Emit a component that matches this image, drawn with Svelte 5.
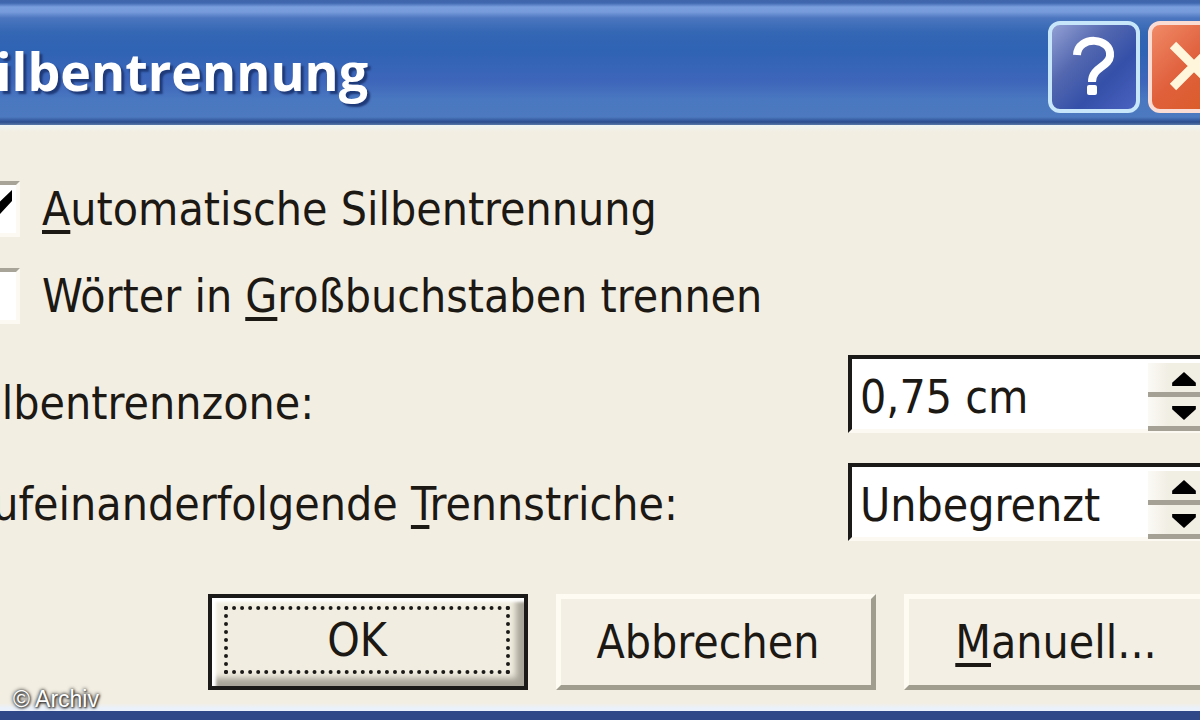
<script lang="ts">
  let autoHyphenate = $state(true);
  let hyphenateCaps = $state(false);
  let zone = $state(0.75);
  let limit = $state(0);

  let zoneText = $derived(zone.toFixed(2).replace(".", ",") + " cm");
  let limitText = $derived(limit === 0 ? "Unbegrenzt" : String(limit));

  function stepZone(delta: number) {
    zone = Math.max(0.25, zone + delta);
  }

  function stepLimit(delta: number) {
    limit = Math.max(0, limit + delta);
  }
</script>

{#snippet spinner(name: string, step: (dir: number) => void)}
  <div class="spinner">
    <button type="button" aria-label="{name} erhöhen" onclick={() => step(1)}>
      <svg viewBox="0 0 22 13"><path d="M11 0 L22 10 V13 H0 V10 Z" /></svg>
    </button>
    <button
      type="button"
      aria-label="{name} verringern"
      onclick={() => step(-1)}
    >
      <svg viewBox="0 0 22 13"><path d="M0 0 H22 V3 L11 13 L0 3 Z" /></svg>
    </button>
  </div>
{/snippet}

<main class="screen">
  <div class="dialog" role="dialog" aria-labelledby="dialog-title">
    <header class="titlebar">
      <h1 id="dialog-title">Silbentrennung</h1>
      <button type="button" class="caption help" aria-label="Hilfe">
        <svg viewBox="0 0 84 84">
          <path
            d="M25 30 C26 10 60 12 58 31 C57 42 40 42 40 57"
            fill="none"
            stroke="#fff"
            stroke-width="8"
          />
          <rect x="35" y="60" width="10" height="10" rx="2" fill="#fff" />
        </svg>
      </button>
      <button type="button" class="caption close" aria-label="Schließen">
        <svg viewBox="0 0 84 84">
          <path
            d="M21 20 L63 62 M63 20 L21 62"
            fill="none"
            stroke="#fff6dc"
            stroke-width="9"
          />
        </svg>
      </button>
    </header>

    <form class="content" onsubmit={(e) => e.preventDefault()}>
      <div class="checks">
        <label class="check">
          <input type="checkbox" bind:checked={autoHyphenate} />
          <span><u>A</u>utomatische Silbentrennung</span>
        </label>
        <label class="check">
          <input type="checkbox" bind:checked={hyphenateCaps} />
          <span>Wörter in <u>G</u>roßbuchstaben trennen</span>
        </label>
      </div>

      <div class="fields">
        <div class="row">
          <label class="low" for="zone"><u>S</u>ilbentrennzone:</label>
          <div class="field">
            <input id="zone" type="text" value={zoneText} />
            {@render spinner("Silbentrennzone", (dir) => stepZone(dir * 0.25))}
          </div>
        </div>
        <div class="row">
          <label for="limit">Aufeinanderfolgende <u>T</u>rennstriche:</label>
          <div class="field">
            <input id="limit" type="text" value={limitText} />
            {@render spinner("Trennstriche", stepLimit)}
          </div>
        </div>
      </div>

      <div class="buttons">
        <button type="submit" class="push default"><span>OK</span></button>
        <button type="button" class="push">Abbrechen</button>
        <button type="button" class="push"><u>M</u>anuell...</button>
      </div>
    </form>
  </div>
  <small class="credit">© Archiv</small>
</main>

<style>
  :global(body) {
    background: #f3eee2;
  }

  .screen {
    position: relative;
    display: flex;
    min-height: 100vh;
    overflow: hidden;
    color: #1c1814;
    font-family: "DejaVu Sans Condensed", Tahoma, sans-serif;
    font-size: 46px;
    line-height: 60px;
  }

  /* The dialog runs past the left and right edges of the view. */
  .dialog {
    flex: 1;
    display: flex;
    flex-direction: column;
    margin: 0 -56px;
    box-sizing: border-box;
    border-bottom: 9px solid #2f4888;
  }

  .titlebar {
    display: flex;
    align-items: center;
    gap: 8px;
    height: 125px;
    box-sizing: border-box;
    padding: 9px 16px 0 23px;
    background: linear-gradient(
      #3f65ab 0,
      #4068b0 3px,
      #7a9fde 7px,
      #779bdb 12px,
      #4c76bf 18px,
      #3467b4 32px,
      #2f63b4 50px,
      #3e66ba 82px,
      #4a78c0 100px,
      #4c79bf 117px,
      #2b4c8e 122px,
      #5878a8 125px
    );
  }

  h1 {
    flex: 1;
    margin: 0;
    padding-top: 8px;
    color: #fff;
    font-family: "Open Sans", "Trebuchet MS", sans-serif;
    font-size: 52px;
    font-weight: 700;
    text-shadow: 3px 3px 2px #1f3a78;
  }

  .caption {
    width: 92px;
    height: 92px;
    padding: 0;
    border: 4px solid #c8e6fa;
    border-radius: 12px;
  }

  .caption svg {
    display: block;
  }

  .help {
    background: linear-gradient(135deg, #93a0d4, #5468b0 35%, #3450a8 65%, #4a62c0);
  }

  .close {
    border-color: #fbdcd4;
    background: linear-gradient(135deg, #f08a68, #e0603c 45%, #d85a20);
  }

  .content {
    flex: 1;
    display: flex;
    flex-direction: column;
    padding: 54px 32px 21px 20px;
    background: linear-gradient(#eef4f4, #f3eee2 7px calc(100% - 8px), #eaf1fa calc(100% - 3px));
  }

  .checks {
    display: flex;
    flex-direction: column;
    gap: 27px;
  }

  .check {
    display: flex;
    align-items: center;
    gap: 22px;
  }

  .check input {
    appearance: none;
    width: 56px;
    height: 56px;
    margin: 0;
    border: 4px solid #fbf9f2;
    border-top-color: #a8a498;
    border-left-color: #a8a498;
    background: #fff;
  }

  .check input:checked {
    background: #fff
      url("data:image/svg+xml,%3Csvg xmlns='http://www.w3.org/2000/svg' viewBox='0 0 48 48'%3E%3Cpath d='M8 18 L20 28 L44 5 V16 L20 42 L8 32 Z'/%3E%3C/svg%3E");
  }

  u {
    text-decoration-thickness: 4px;
    text-underline-offset: 5px;
    text-decoration-skip-ink: none;
  }

  .fields {
    display: flex;
    flex-direction: column;
    gap: 30px;
    padding-top: 29px;
  }

  .row {
    display: flex;
    align-items: center;
    justify-content: space-between;
  }

  .row label {
    padding-top: 3px;
  }

  .row .low {
    align-self: flex-end;
  }

  .field {
    display: flex;
    width: 376px;
    height: 78px;
    box-sizing: border-box;
    border: 4px solid #fbf9f2;
    border-top-color: #1c1a18;
    border-left-color: #1c1a18;
    background: #fff;
  }

  .field input {
    flex: 1;
    min-width: 0;
    padding: 6px 0 0 8px;
    border: 0;
    background: transparent;
    color: inherit;
    font: inherit;
  }

  .spinner {
    display: flex;
    flex-direction: column;
    width: 72px;
    padding-top: 4px;
    margin-bottom: -2px;
  }

  .spinner button {
    flex: 1;
    display: flex;
    align-items: flex-end;
    justify-content: center;
    padding: 0 0 6px;
    border: 0;
    border-bottom: 5px solid #a5a195;
    background: linear-gradient(90deg, #fbfaf5, #f1eee4 20px);
  }

  .spinner svg {
    width: 24px;
    height: 14px;
  }

  .buttons {
    display: flex;
    justify-content: flex-end;
    gap: 28px;
    margin-top: auto;
  }

  .push {
    width: 320px;
    height: 96px;
    box-sizing: border-box;
    padding: 0 16px 0 0;
    border: 5px solid #fdfbf2;
    border-right-color: #a09c8e;
    border-bottom-color: #a09c8e;
    background: #f3efe4;
    color: inherit;
    font: inherit;
  }

  .default {
    padding: 8px 14px 12px 12px;
    border: 4px solid #1c1a18;
    box-shadow:
      inset 4px 4px 3px #fff,
      inset -8px -8px 6px #a8a498;
    background: #f1eee1;
  }

  .default span {
    display: block;
    height: 100%;
    box-sizing: border-box;
    padding-right: 20px;
    border: 4px dotted #1c1a18;
  }

  .credit {
    position: absolute;
    left: 13px;
    bottom: 8px;
    color: #fff;
    font-family: "Liberation Sans", Arial, sans-serif;
    font-size: 23px;
    line-height: 26px;
    text-shadow:
      0 0 3px #333,
      0 0 4px #444,
      1px 1px 2px #333;
  }
</style>
